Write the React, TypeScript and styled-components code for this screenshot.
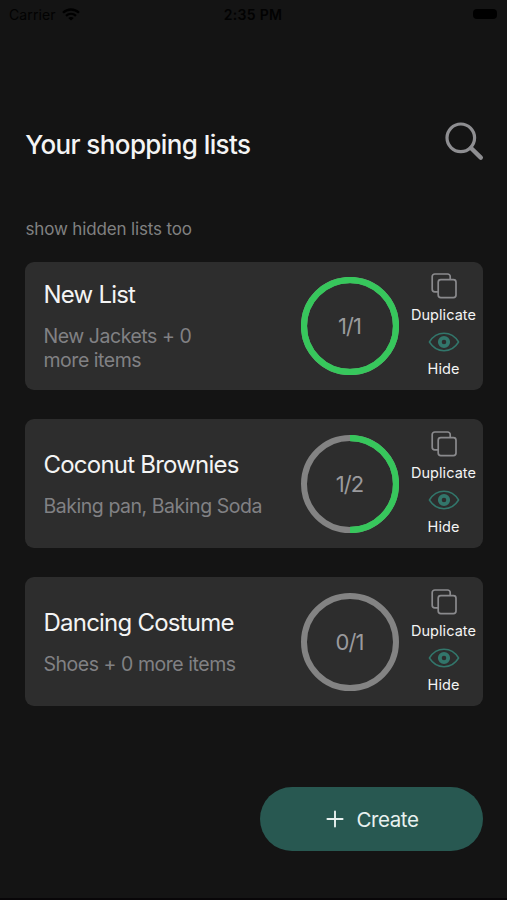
import React from "react";
import styled, { createGlobalStyle } from "styled-components";

const GlobalStyle = createGlobalStyle`
  * { box-sizing: border-box; }
  body { margin: 0; background: #141414; }
  button { font: inherit; border: 0; padding: 0; background: none; color: inherit; cursor: pointer; }
  svg { display: block; flex: none; }
`;

const Screen = styled.main`
  width: 507px;
  height: 900px;
  display: flex;
  flex-direction: column;
  background: #141414;
  border-bottom: 2px solid #080608;
  color: #f4f4f4;
  font-family: Inter, "Liberation Sans", sans-serif;
  overflow: hidden;
`;

const StatusBar = styled.div`
  height: 28px;
  padding: 0 10px 0 9px;
  display: grid;
  grid-template-columns: 1fr auto 1fr;
  align-items: center;
  color: #020202;
  font-size: 14px;
`;

const Carrier = styled.div`
  display: flex;
  align-items: center;
  gap: 6px;
  letter-spacing: 0.1px;
`;

const Clock = styled.div`
  font-weight: 600;
  font-size: 14px;
  letter-spacing: 0.3px;
`;

const Battery = styled.div`
  justify-self: end;
  width: 24px;
  height: 10px;
  border-radius: 4px;
  background: #000;
`;

const Header = styled.header`
  height: 48px;
  margin: 90px 22px 0 25.2px;
  display: flex;
  align-items: center;
  justify-content: space-between;
`;

const Title = styled.h1`
  margin: 6px 0 0;
  font-size: 26px;
  line-height: 32px;
  font-weight: 500;
  letter-spacing: -0.6px;
  white-space: nowrap;
`;

const ShowHidden = styled.button`
  align-self: flex-start;
  height: 24px;
  margin: 51px 0 0 25.5px;
  color: #818181;
  font-size: 17px !important;
  line-height: 24px !important;
  letter-spacing: -0.15px;
`;

const Lists = styled.section`
  margin: 20.5px 24.5px 0 25px;
  display: flex;
  flex-direction: column;
  gap: 29.8px;
`;

const Card = styled.article`
  height: 128.2px;
  padding-left: 18.5px;
  display: flex;
  align-items: center;
  border-radius: 9px;
  background: #2d2d2d;
`;

const Info = styled.div<{ $narrow?: boolean }>`
  flex: none;
  width: 257px;
  padding: 1px ${(p) => (p.$narrow ? "90px" : "0")} 0 0;
`;

const ListName = styled.h2`
  margin: 0;
  font-size: 24px;
  line-height: 29px;
  font-weight: 400;
  letter-spacing: -0.78px;
  white-space: nowrap;
`;

const Summary = styled.p`
  margin: 16px 0 0;
  color: #818184;
  font-size: 19.5px;
  line-height: 23.5px;
  letter-spacing: -0.46px;
`;

const Progress = styled.div`
  flex: none;
  width: 98px;
  height: 98px;
  display: grid;
  place-items: center;
  > * { grid-area: 1 / 1; }
`;

const Count = styled.span`
  color: #9a9a9d;
  font-size: 22px;
  line-height: 28px;
  letter-spacing: -1px;
`;

const Actions = styled.div`
  flex: none;
  width: 78px;
  margin-left: 6px;
  display: flex;
  flex-direction: column;
`;

const Action = styled.button`
  display: flex;
  flex-direction: column;
  align-items: center;
  gap: 6.5px;
  margin-bottom: 7px;
  &:last-child { margin-bottom: 0; }
`;

const ActionLabel = styled.span`
  font-size: 14.5px;
  line-height: 20px;
  letter-spacing: 0.05px;
`;

const CreateButton = styled.button`
  align-self: flex-end;
  width: 222.5px;
  height: 64px;
  margin: 81.5px 24.5px 0 0;
  padding-left: 2px !important;
  display: flex;
  align-items: center;
  justify-content: center;
  gap: 12.5px;
  border-radius: 32px;
  background: #285851 !important;
  color: #e8f1ef !important;
  font-size: 20.5px !important;
  letter-spacing: -0.4px;
`;

const WifiIcon = () => (
  <svg width="18" height="13" viewBox="0 0 18 13" fill="none" stroke="#000" strokeWidth="2.3">
    <path d="M1 4.8C5.5.4 12.5.4 17 4.8M4 7.9c2.9-2.7 7.1-2.7 10 0" />
    <path d="M9 12.5 6.2 9.9c1.6-1.3 4-1.3 5.6 0Z" fill="#000" stroke="none" />
  </svg>
);

const SearchIcon = () => (
  <svg width="40" height="40" viewBox="0 0 40 40" fill="none" stroke="#8e8e91" strokeLinecap="round">
    <circle cx="15.8" cy="15.8" r="13.8" strokeWidth="3.2" />
    <path d="m26 26 9.8 9.6" strokeWidth="4.4" />
  </svg>
);

const CopyIcon = () => (
  <svg width="26" height="26" viewBox="0 0 26 26" fill="none" stroke="#8a8a8d" strokeWidth="1.7" strokeLinejoin="round">
    <rect x="7.2" y="6.6" width="17.8" height="18" rx="2.6" />
    <path d="M19.2 6.6V3.6A2.6 2.6 0 0 0 16.6 1H3.8a2.6 2.6 0 0 0-2.6 2.6v12.6a2.6 2.6 0 0 0 2.6 2.6h3.4" />
  </svg>
);

const EyeIcon = () => (
  <svg width="32" height="20" viewBox="0 0 32 20" fill="none" stroke="#32766b">
    <path d="M1.4 10C5 4.2 10 1.3 16 1.3S27 4.2 30.6 10C27 15.8 22 18.7 16 18.7S5 15.8 1.4 10Z" strokeWidth="1.5" strokeLinejoin="round" />
    <circle cx="16" cy="10" r="4.2" strokeWidth="3.8" />
  </svg>
);

const PlusIcon = () => (
  <svg width="18" height="18" viewBox="0 0 18 18" fill="none" stroke="#e8f1ef" strokeWidth="1.9" strokeLinecap="round">
    <path d="M9 1.4v15.2M1.4 9h15.2" />
  </svg>
);

const Ring = ({ ratio }: { ratio: number }) => (
  <svg width="98" height="98" viewBox="0 0 98 98" fill="none" strokeWidth="6">
    <circle cx="49" cy="49" r="46" stroke="#838383" />
    {ratio > 0 && (
      <circle
        cx="49"
        cy="49"
        r="46"
        stroke="#37c75c"
        strokeWidth="6.3"
        pathLength="100"
        strokeDasharray={ratio < 1 ? `${ratio * 100} 100` : undefined}
        transform="rotate(-90 49 49)"
      />
    )}
  </svg>
);

type ShoppingList = {
  name: string;
  summary: string;
  done: number;
  total: number;
  narrow?: boolean;
};

const shoppingLists: ShoppingList[] = [
  { name: "New List", summary: "New Jackets + 0 more items", done: 1, total: 1, narrow: true },
  { name: "Coconut Brownies", summary: "Baking pan, Baking Soda", done: 1, total: 2 },
  { name: "Dancing Costume", summary: "Shoes + 0 more items", done: 0, total: 1 },
];

export default function App() {
  return (
    <>
      <GlobalStyle />
      <Screen>
        <StatusBar>
          <Carrier>
            Carrier
            <WifiIcon />
          </Carrier>
          <Clock>2:35 PM</Clock>
          <Battery />
        </StatusBar>
        <Header>
          <Title>Your shopping lists</Title>
          <button aria-label="Search">
            <SearchIcon />
          </button>
        </Header>
        <ShowHidden>show hidden lists too</ShowHidden>
        <Lists>
          {shoppingLists.map((list) => (
            <Card key={list.name}>
              <Info $narrow={list.narrow}>
                <ListName>{list.name}</ListName>
                <Summary>{list.summary}</Summary>
              </Info>
              <Progress>
                <Ring ratio={list.done / list.total} />
                <Count>{`${list.done}/${list.total}`}</Count>
              </Progress>
              <Actions>
                <Action>
                  <CopyIcon />
                  <ActionLabel>Duplicate</ActionLabel>
                </Action>
                <Action>
                  <EyeIcon />
                  <ActionLabel>Hide</ActionLabel>
                </Action>
              </Actions>
            </Card>
          ))}
        </Lists>
        <CreateButton>
          <PlusIcon />
          Create
        </CreateButton>
      </Screen>
    </>
  );
}
